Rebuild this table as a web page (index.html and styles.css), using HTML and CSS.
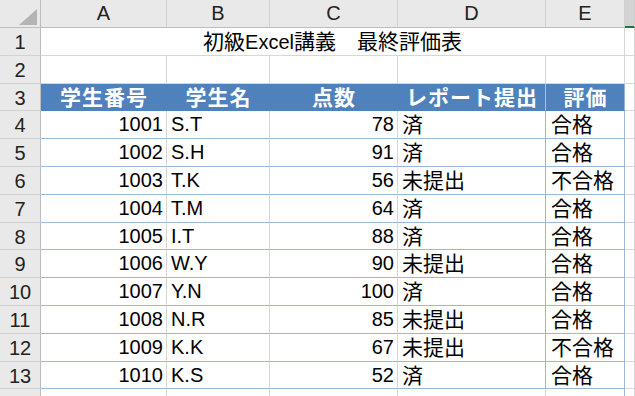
FILE: index.html
```html
<!DOCTYPE html>
<html lang="ja">
<head>
<meta charset="utf-8">
<title>初級Excel講義 最終評価表</title>
<link rel="stylesheet" href="styles.css">
</head>
<body>
<div class="sheet">
  <div class="corner"><svg width="40" height="27" viewBox="0 0 40 27"><polygon points="37,9 37,25 19,25" fill="#b4b4b4"/></svg></div>
  <div class="ch">A</div><div class="ch">B</div><div class="ch">C</div><div class="ch">D</div><div class="ch">E</div><div class="ch ch-sel"></div>

  <div class="rh">1</div><div class="c title"><span class="jp">初級</span>Excel<span class="jp">講義　最終評価表</span></div><div class="c f"></div>

  <div class="rh">2</div><div class="c"></div><div class="c"></div><div class="c"></div><div class="c"></div><div class="c"></div><div class="c f"></div>

  <div class="rh">3</div><div class="c hd">学生番号</div><div class="c hd">学生名</div><div class="c hd">点数</div><div class="c hd hd-d">レポート提出</div><div class="c hd hd-e">評価</div><div class="c f"></div>

  <div class="rh">4</div><div class="c d num">1001</div><div class="c d">S.T</div><div class="c d num">78</div><div class="c d dd">済</div><div class="c d de">合格</div><div class="c f"></div>
  <div class="rh">5</div><div class="c d num">1002</div><div class="c d">S.H</div><div class="c d num">91</div><div class="c d dd">済</div><div class="c d de">合格</div><div class="c f"></div>
  <div class="rh">6</div><div class="c d num">1003</div><div class="c d">T.K</div><div class="c d num">56</div><div class="c d dd">未提出</div><div class="c d de">不合格</div><div class="c f"></div>
  <div class="rh">7</div><div class="c d num">1004</div><div class="c d">T.M</div><div class="c d num">64</div><div class="c d dd">済</div><div class="c d de">合格</div><div class="c f"></div>
  <div class="rh">8</div><div class="c d num">1005</div><div class="c d">I.T</div><div class="c d num">88</div><div class="c d dd">済</div><div class="c d de">合格</div><div class="c f"></div>
  <div class="rh">9</div><div class="c d num">1006</div><div class="c d">W.Y</div><div class="c d num">90</div><div class="c d dd">未提出</div><div class="c d de">合格</div><div class="c f"></div>
  <div class="rh">10</div><div class="c d num">1007</div><div class="c d">Y.N</div><div class="c d num">100</div><div class="c d dd">済</div><div class="c d de">合格</div><div class="c f"></div>
  <div class="rh">11</div><div class="c d num">1008</div><div class="c d">N.R</div><div class="c d num">85</div><div class="c d dd">未提出</div><div class="c d de">合格</div><div class="c f"></div>
  <div class="rh">12</div><div class="c d num">1009</div><div class="c d">K.K</div><div class="c d num">67</div><div class="c d dd">未提出</div><div class="c d de">不合格</div><div class="c f"></div>
  <div class="rh">13</div><div class="c d num">1010</div><div class="c d">K.S</div><div class="c d num">52</div><div class="c d dd">済</div><div class="c d de">合格</div><div class="c f"></div>

  <div class="rh"></div><div class="c"></div><div class="c"></div><div class="c"></div><div class="c"></div><div class="c de-last"></div><div class="c f"></div>
</div>
</body>
</html>
```
FILE: styles.css
```css
html, body {
  margin: 0;
  padding: 0;
  background: #ffffff;
  overflow: hidden;
}
body {
  width: 635px;
  height: 396px;
  font-family: "Liberation Sans", "Noto Sans CJK JP", sans-serif;
  font-size: 20px;
  color: #000;
}
.sheet {
  display: grid;
  grid-template-columns: 41px 126px 103px 128px 148px 79px 1fr;
  grid-template-rows: 28px repeat(14, 27.8px);
  height: 396px;
  overflow: hidden;
}
.sheet > div {
  box-sizing: border-box;
  overflow: hidden;
  white-space: nowrap;
}
.corner {
  background: #e9e9e9;
  border-right: 1px solid #bdbdbd;
  border-bottom: 1px solid #bdbdbd;
}
.corner svg { display: block; }
.ch {
  background: #e9e9e9;
  border-right: 1px solid #cfcfcf;
  border-bottom: 1px solid #bdbdbd;
  text-align: center;
  line-height: 27px;
  color: #222;
}
.ch-sel {
  background: #d3d3d3;
  border-bottom: 2px solid #217346;
}
.rh {
  background: #e9e9e9;
  border-right: 1px solid #bdbdbd;
  border-bottom: 1px solid #d2d2d2;
  text-align: center;
  line-height: 28px;
  color: #222;
}
.c {
  border-right: 1px solid #d6d6d6;
  border-bottom: 1px solid #d6d6d6;
  line-height: 27.8px;
  padding: 0 3px 0 4px;
}
.title {
  grid-column: span 5;
  text-align: center;
  padding-right: 4px;
}
.jp { font-size: 21px; }
.hd {
  background: #4f81bd;
  color: #fff;
  font-weight: bold;
  text-align: center;
  font-size: 21px;
  letter-spacing: 1px;
  border-right-color: #4f81bd;
  border-bottom-color: #4f81bd;
}
.hd-d { border-right-color: #a9c1e0; }
.hd-e { border-right-color: #95b3d7; }
.d { border-bottom-color: #9bb7da; }
.num { text-align: right; }
.dd { border-right-color: #9bb7da; font-size: 21px; }
.de { border-right-color: #9bb7da; font-size: 21px; padding-left: 5px; }
.de-last { border-right-color: #9bb7da; }
```
